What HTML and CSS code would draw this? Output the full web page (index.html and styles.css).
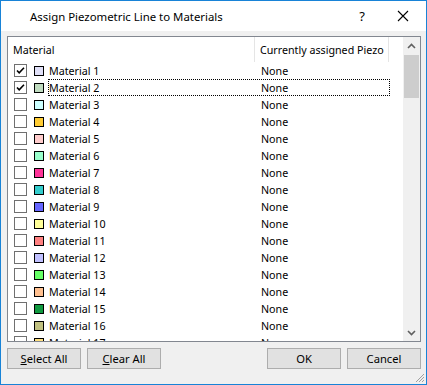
FILE: index.html
```html
<!DOCTYPE html>
<html>
<head>
<meta charset="utf-8">
<link rel="stylesheet" href="styles.css">
</head>
<body>
<div class="window">
  <div class="titlebar">
    <div class="title">Assign Piezometric Line to Materials</div>
    <div class="tb-help">?</div>
    <div class="tb-close">
      <svg width="12" height="12" viewBox="0 0 12 12"><path d="M1 1 L11 11 M11 1 L1 11" stroke="#000" stroke-width="1.1" fill="none"/></svg>
    </div>
  </div>
  <div class="content">
    <div class="list">
      <div class="list-main">
        <div class="header">
          <div class="hcell hcell-name">Material</div>
          <div class="hcell hcell-piezo">Currently assigned Piezo</div>
          <div class="hcell hcell-rest"></div>
        </div>
        <div class="rows">
          <div class="row"><span class="check checked"><svg width="11" height="11" viewBox="0 0 11 11"><path d="M2 5.5 L4.2 7.8 L9 2.8" stroke="#000" stroke-width="1.6" fill="none"/></svg></span><span class="swatch" style="background:#e0e0f8"></span><span class="rowbody"><span class="name">Material 1</span><span class="piezo">None</span></span></div>
          <div class="row"><span class="check checked"><svg width="11" height="11" viewBox="0 0 11 11"><path d="M2 5.5 L4.2 7.8 L9 2.8" stroke="#000" stroke-width="1.6" fill="none"/></svg></span><span class="swatch" style="background:#c0dcc0"></span><span class="rowbody focus"><span class="name">Material 2</span><span class="piezo">None</span></span></div>
          <div class="row"><span class="check"></span><span class="swatch" style="background:#ccffff"></span><span class="rowbody"><span class="name">Material 3</span><span class="piezo">None</span></span></div>
          <div class="row"><span class="check"></span><span class="swatch" style="background:#ffcc33"></span><span class="rowbody"><span class="name">Material 4</span><span class="piezo">None</span></span></div>
          <div class="row"><span class="check"></span><span class="swatch" style="background:#ffcccc"></span><span class="rowbody"><span class="name">Material 5</span><span class="piezo">None</span></span></div>
          <div class="row"><span class="check"></span><span class="swatch" style="background:#99ffcc"></span><span class="rowbody"><span class="name">Material 6</span><span class="piezo">None</span></span></div>
          <div class="row"><span class="check"></span><span class="swatch" style="background:#ff3399"></span><span class="rowbody"><span class="name">Material 7</span><span class="piezo">None</span></span></div>
          <div class="row"><span class="check"></span><span class="swatch" style="background:#33cccc"></span><span class="rowbody"><span class="name">Material 8</span><span class="piezo">None</span></span></div>
          <div class="row"><span class="check"></span><span class="swatch" style="background:#6666ff"></span><span class="rowbody"><span class="name">Material 9</span><span class="piezo">None</span></span></div>
          <div class="row"><span class="check"></span><span class="swatch" style="background:#ffff99"></span><span class="rowbody"><span class="name">Material 10</span><span class="piezo">None</span></span></div>
          <div class="row"><span class="check"></span><span class="swatch" style="background:#ff8080"></span><span class="rowbody"><span class="name">Material 11</span><span class="piezo">None</span></span></div>
          <div class="row"><span class="check"></span><span class="swatch" style="background:#c0c0ff"></span><span class="rowbody"><span class="name">Material 12</span><span class="piezo">None</span></span></div>
          <div class="row"><span class="check"></span><span class="swatch" style="background:#66ff66"></span><span class="rowbody"><span class="name">Material 13</span><span class="piezo">None</span></span></div>
          <div class="row"><span class="check"></span><span class="swatch" style="background:#ffc090"></span><span class="rowbody"><span class="name">Material 14</span><span class="piezo">None</span></span></div>
          <div class="row"><span class="check"></span><span class="swatch" style="background:#109940"></span><span class="rowbody"><span class="name">Material 15</span><span class="piezo">None</span></span></div>
          <div class="row"><span class="check"></span><span class="swatch" style="background:#c0c080"></span><span class="rowbody"><span class="name">Material 16</span><span class="piezo">None</span></span></div>
          <div class="row"><span class="check"></span><span class="swatch" style="background:#ffe080"></span><span class="rowbody"><span class="name">Material 17</span><span class="piezo">None</span></span></div>
        </div>
      </div>
      <div class="scrollbar">
        <div class="sb-btn"><svg width="9" height="6" viewBox="0 0 9 6"><path d="M1 5 L4.5 1.5 L8 5" stroke="#606060" stroke-width="1.6" fill="none"/></svg></div>
        <div class="sb-track"><div class="sb-thumb"></div></div>
        <div class="sb-btn"><svg width="9" height="6" viewBox="0 0 9 6"><path d="M1 1 L4.5 4.5 L8 1" stroke="#606060" stroke-width="1.6" fill="none"/></svg></div>
      </div>
    </div>
    <div class="buttons">
      <div class="btn-group">
        <div class="btn"><u>S</u>elect All</div>
        <div class="btn"><u>C</u>lear All</div>
      </div>
      <div class="btn-group">
        <div class="btn">OK</div>
        <div class="btn">Cancel</div>
      </div>
    </div>
  </div>
  <div class="grip">
    <svg width="12" height="12" viewBox="0 0 12 12"><path d="M11 3 L3 11 M11 6 L6 11 M11 9 L9 11" stroke="#a0a0a0" stroke-width="1" fill="none"/></svg>
  </div>
</div>
</body>
</html>
```
FILE: styles.css
```css
html, body {
  margin: 0;
  padding: 0;
}
body {
  font-family: "Noto Sans", "Liberation Sans", sans-serif;
  font-size: 10.7px;
  color: #000;
  white-space: nowrap;
}
.window {
  position: relative;
  width: 427px;
  height: 385px;
  box-sizing: border-box;
  border: 1px solid #1883d7;
  background: #f0f0f0;
  display: flex;
  flex-direction: column;
}
.titlebar {
  height: 30px;
  background: #fff;
  display: flex;
  align-items: center;
  flex: none;
}
.title {
  padding-left: 29px;
  flex: 1;
  font-size: 11.4px;
  padding-top: 1px;
}
.tb-help {
  width: 20px;
  text-align: center;
  font-size: 13px;
  margin-right: 25px;
}
.tb-close {
  width: 12px;
  height: 12px;
  margin-right: 17px;
  display: flex;
}
.content {
  padding: 5px 5px 0 6px;
  display: flex;
  flex-direction: column;
}
.list {
  height: 306px;
  box-sizing: border-box;
  border: 1px solid #828790;
  background: #fff;
  display: flex;
}
.list-main {
  flex: 1;
  display: flex;
  flex-direction: column;
  overflow: hidden;
}
.header {
  height: 25px;
  display: flex;
  flex: none;
}
.hcell {
  height: 25px;
  display: flex;
  align-items: center;
  box-sizing: border-box;
  flex: none;
}
.hcell-name {
  width: 247px;
  padding-left: 5px;
  border-right: 1px solid #e5e5e5;
}
.hcell-piezo {
  width: 134px;
  padding-left: 5px;
  border-right: 1px solid #e5e5e5;
}
.hcell-rest {
  flex: 1;
}
.rows {
  flex: 1;
  overflow: hidden;
}
.row {
  height: 17px;
  display: flex;
  align-items: center;
}
.check {
  width: 13px;
  height: 13px;
  box-sizing: border-box;
  border: 1px solid #707070;
  background: #fff;
  margin-left: 6px;
  display: flex;
  align-items: center;
  justify-content: center;
  flex: none;
}
.swatch {
  width: 10px;
  height: 10px;
  box-sizing: border-box;
  border: 1px solid #000;
  margin-left: 7px;
  flex: none;
}
.rowbody {
  margin-left: 4px;
  width: 342px;
  height: 17px;
  box-sizing: border-box;
  border: 1px dotted transparent;
  display: flex;
  align-items: center;
  flex: none;
}
.rowbody.focus {
  border-color: #000;
}
.name {
  width: 207px;
  flex: none;
}
.piezo {
  padding-left: 5px;
}
.scrollbar {
  width: 17px;
  background: #f0f0f0;
  display: flex;
  flex-direction: column;
  flex: none;
}
.sb-btn {
  height: 17px;
  display: flex;
  align-items: center;
  justify-content: center;
  flex: none;
}
.sb-track {
  flex: 1;
  padding: 1px 1px 0 1px;
}
.sb-thumb {
  height: 43px;
  background: #cdcdcd;
}
.buttons {
  display: flex;
  justify-content: space-between;
  margin-top: 6px;
}
.btn-group {
  display: flex;
  gap: 6px;
}
.btn {
  width: 74px;
  height: 21px;
  box-sizing: border-box;
  border: 1px solid #adadad;
  background: #e1e1e1;
  display: flex;
  align-items: center;
  justify-content: center;
  font-size: 11.2px;
}
.grip {
  position: absolute;
  right: 1px;
  bottom: 1px;
  width: 12px;
  height: 12px;
}
```
